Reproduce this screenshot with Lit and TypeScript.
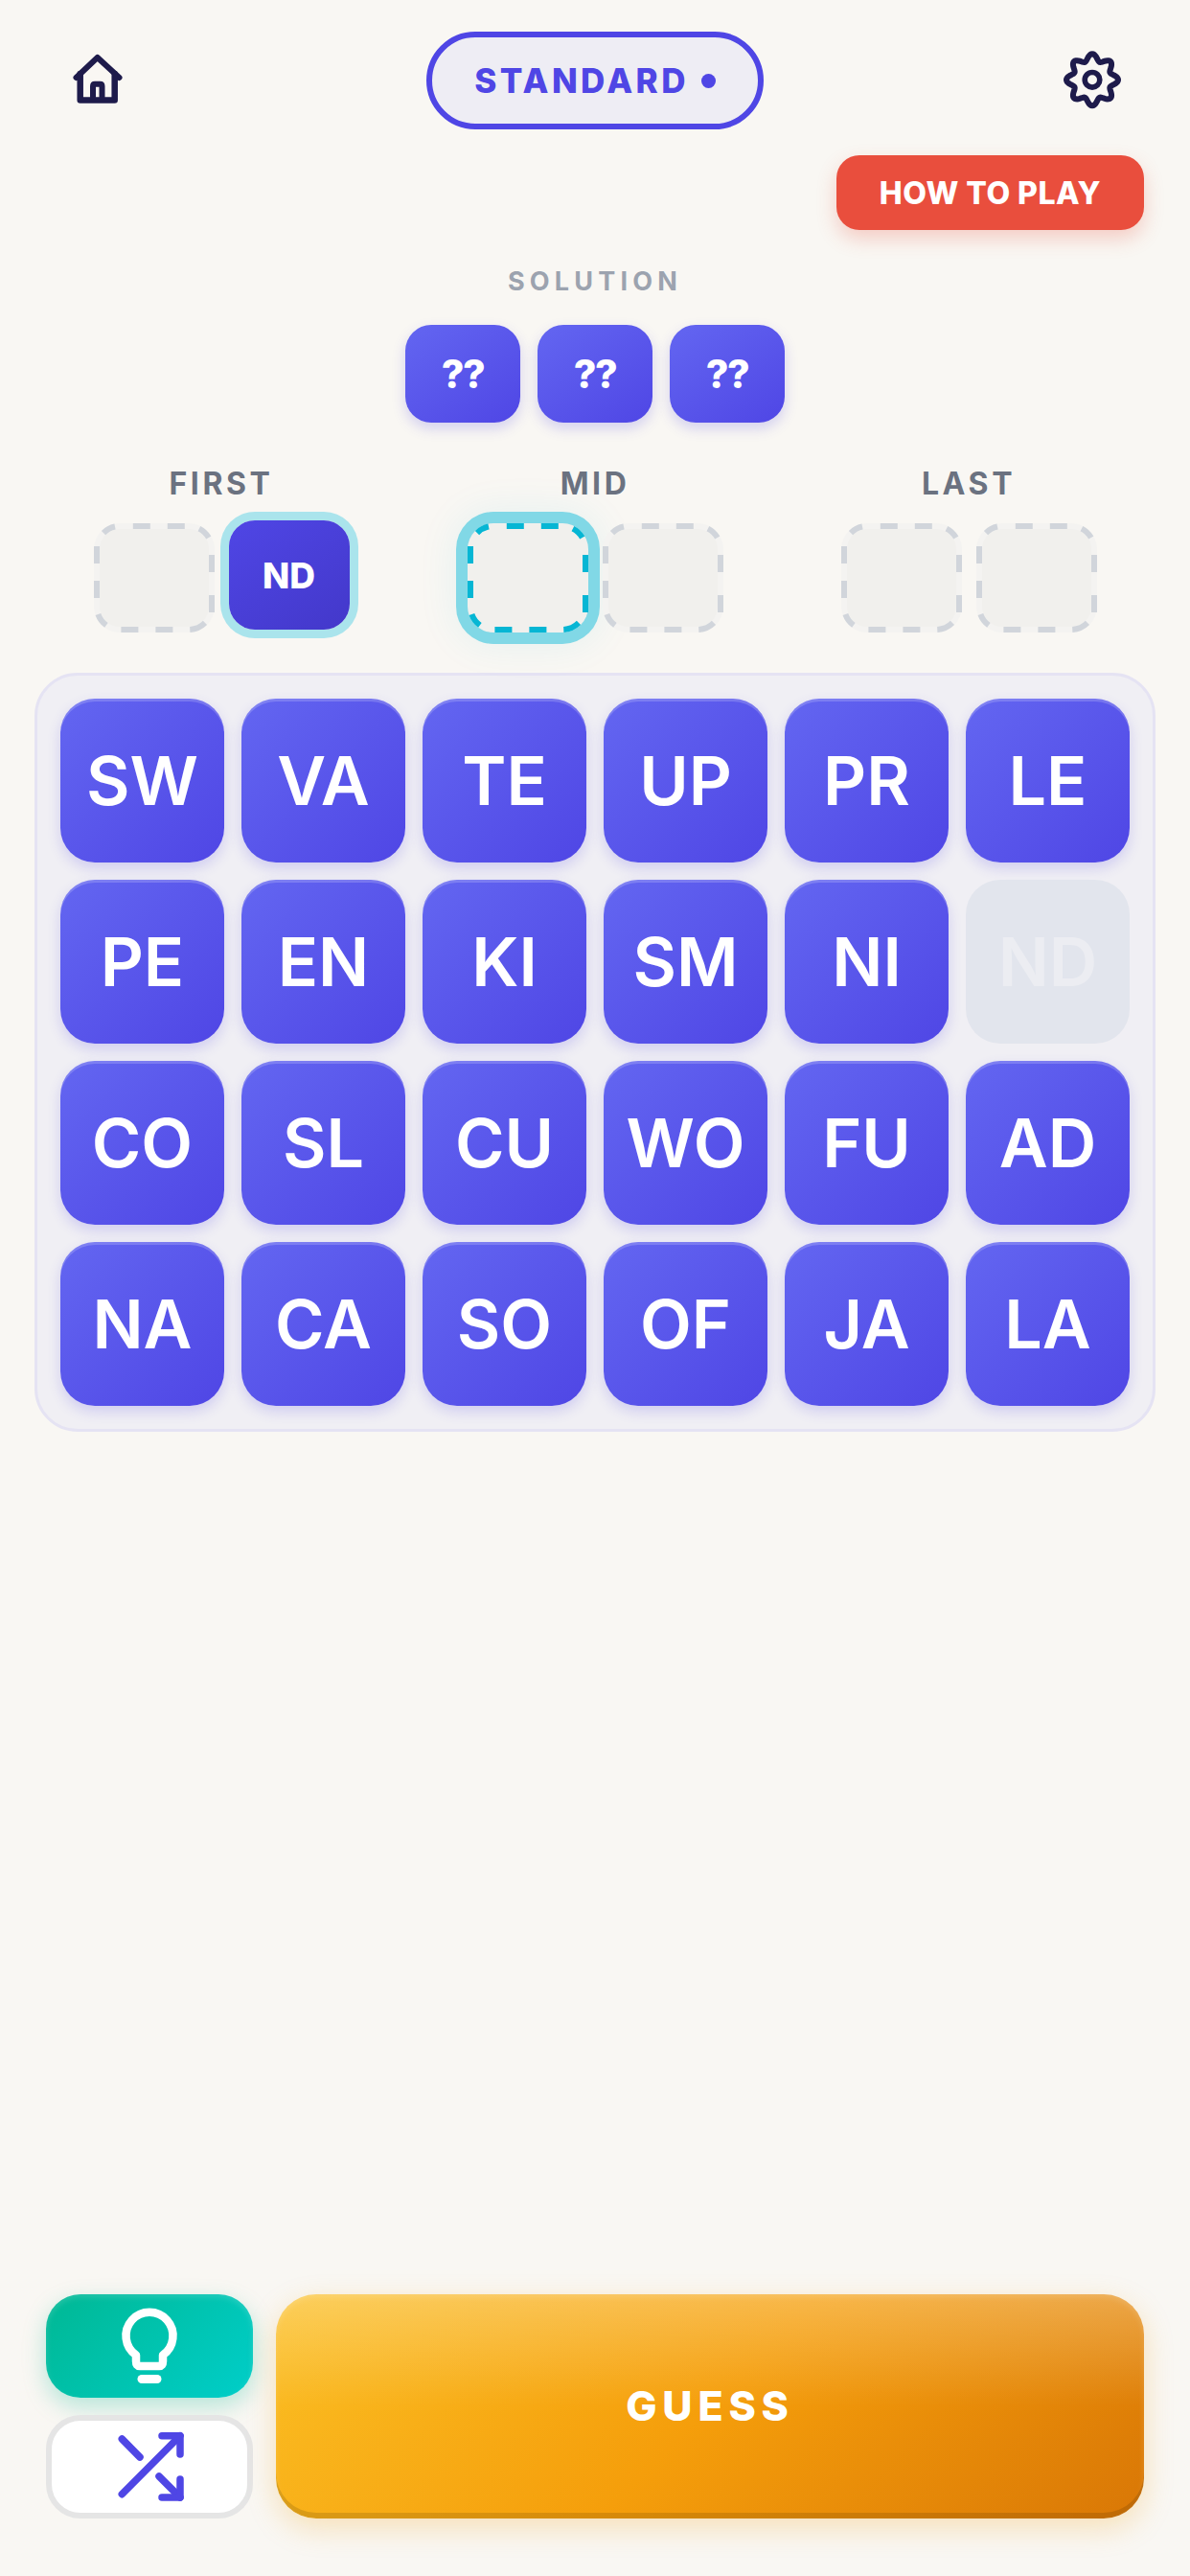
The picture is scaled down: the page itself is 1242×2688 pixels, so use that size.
import { LitElement, html, css, svg } from "lit";
import { customElement } from "lit/decorators.js";

const ROWS = [
  ["SW", "VA", "TE", "UP", "PR", "LE"],
  ["PE", "EN", "KI", "SM", "NI", "ND"],
  ["CO", "SL", "CU", "WO", "FU", "AD"],
  ["NA", "CA", "SO", "OF", "JA", "LA"],
];

const DASHES = [
  "M40.8 3H58.8", "M76.8 3H94.8",
  "M3 24V42", "M3 60V78",
  "M123 33V51", "M123 75V93",
  "M28.4 111H46.4", "M64.4 111H82.4",
  "M10.03 10.03A24 24 0 0 1 22 3.53",
  "M109.9 5.62A24 24 0 0 1 119.78 15",
  "M100.26 110.97A24 24 0 0 0 115.97 103.97",
  "M4.38 95A24 24 0 0 0 12.9 106.4",
];

function gearPath(cx: number, cy: number): string {
  const pts: string[] = [];
  const n = 160;
  for (let i = 0; i < n; i++) {
    const t = (i / n) * Math.PI * 2;
    const r = 23.5 + 3.5 * Math.cos(8 * t);
    pts.push(`${(cx + r * Math.cos(t)).toFixed(2)} ${(cy + r * Math.sin(t)).toFixed(2)}`);
  }
  return "M" + pts.join("L") + "Z";
}

@customElement("app-root")
export class AppRoot extends LitElement {
  static styles = css`
    :host {
      display: flex;
      flex-direction: column;
      width: 1242px;
      height: 2688px;
      background: #f9f7f3;
      font-family: Inter, "Liberation Sans", sans-serif;
      box-sizing: border-box;
      padding: 33px 0 60px;
    }
    * { box-sizing: border-box; }
    .header {
      display: grid;
      grid-template-columns: 1fr auto 1fr;
      align-items: center;
      padding: 0 60px;
    }
    .icon { display: block; width: 90px; height: 90px; }
    .gear { justify-self: end; }
    .pill {
      display: flex;
      align-items: center;
      gap: 13px;
      width: 352px;
      height: 102px;
      justify-content: center;
      border: 6px solid #4f46e5;
      border-radius: 51px;
      background: #eeedf4;
      color: #4f46e5;
      font-size: 35px;
      font-weight: 800;
      letter-spacing: 3.4px;
    }
    .dot { width: 15px; height: 15px; border-radius: 50%; background: #4f46e5; }
    .how-row { display: flex; justify-content: flex-end; padding: 27px 48px 0 0; }
    .how {
      display: flex;
      align-items: center;
      justify-content: center;
      width: 321px;
      height: 78px;
      border-radius: 24px;
      background: #e94e3d;
      color: #fff;
      font-size: 32px;
      font-weight: 800;
      letter-spacing: 0.5px;
      box-shadow: 0 9px 20px rgba(233, 78, 61, 0.25);
    }
    .solution-label {
      margin-top: 39px;
      text-align: center;
      font-size: 27px;
      line-height: 30px;
      font-weight: 700;
      letter-spacing: 5.2px;
      color: #9ca3af;
    }
    .solution {
      display: flex;
      justify-content: center;
      gap: 18px;
      margin-top: 30px;
    }
    .q {
      display: flex;
      align-items: center;
      justify-content: center;
      width: 120px;
      height: 102px;
      border-radius: 27px;
      background: linear-gradient(145deg, #6366f1, #4f46e5);
      color: #fff;
      font-size: 41px;
      font-weight: 800;
      letter-spacing: -1.5px;
      box-shadow: 0 6px 14px rgba(79, 70, 229, 0.22);
    }
    .groups {
      display: flex;
      justify-content: center;
      gap: 123px;
      margin-top: 49px;
    }
    .group { display: flex; flex-direction: column; align-items: center; }
    .group-label {
      font-size: 32px;
      line-height: 30px;
      font-weight: 700;
      letter-spacing: 3.6px;
      color: #6b7280;
    }
    .slots { display: flex; gap: 15px; margin-top: 26px; }
    .slot {
      position: relative;
      width: 126px;
      height: 114px;
      border-radius: 27px;
      background: #f4f3f1;
      color: #d1d5db;
    }
    .slot svg { position: absolute; inset: 0; display: block; width: 126px; height: 114px; }
    .fill { fill: #f1f0ed; }
    .slot.active {
      color: #06b6d4;
      background: #f1f0ed;
      box-shadow: 0 0 0 12px #81d8e6, 0 0 40px 14px rgba(6, 182, 212, 0.08);
    }
    .slot.filled {
      display: flex;
      align-items: center;
      justify-content: center;
      transform: translateY(-3px);
      background: linear-gradient(145deg, #4f46e5, #4338ca);
      color: #fff;
      font-size: 37px;
      font-weight: 800;
      box-shadow: 0 0 0 9px #aae4ec;
    }
    .board {
      display: grid;
      grid-template-columns: repeat(6, 171px);
      grid-auto-rows: 171px;
      gap: 18px;
      width: 1170px;
      margin: 42px 0 0 36px;
      padding: 24px;
      border: 3px solid #e5e3f3;
      border-radius: 45px;
      background: #f0eff4;
    }
    .tile {
      display: flex;
      align-items: center;
      justify-content: center;
      border-radius: 36px;
      background: linear-gradient(135deg, #6366f1, #4f46e5);
      color: #fff;
      font-size: 70px;
      font-weight: 600;
      box-shadow: inset 0 3px 0 rgba(255, 255, 255, 0.18), 0 6px 14px rgba(79, 70, 229, 0.2);
    }
    .tile.used {
      background: #e2e5ed;
      color: #ecedf2;
      box-shadow: none;
    }
    .controls {
      display: flex;
      gap: 24px;
      margin-top: auto;
      padding: 0 48px;
    }
    .side { display: flex; flex-direction: column; gap: 18px; width: 216px; flex: none; }
    .hint, .shuffle {
      display: flex;
      align-items: center;
      justify-content: center;
      height: 108px;
      border-radius: 36px;
    }
    .hint {
      background: linear-gradient(135deg, #00b894, #00cec9);
      box-shadow: inset 0 3px 6px rgba(255, 255, 255, 0.15), 0 9px 24px rgba(0, 184, 148, 0.28);
    }
    .shuffle { background: #fff; border: 6px solid #e5e5e5; }
    .side svg { display: block; width: 72px; height: 72px; overflow: visible; }
    .guess {
      flex: 1;
      display: flex;
      align-items: center;
      justify-content: center;
      height: 234px;
      padding-bottom: 3px;
      border-radius: 42px;
      background:
        linear-gradient(180deg, rgba(255, 255, 255, 0.26), rgba(255, 255, 255, 0) 50%),
        linear-gradient(135deg, #fbbf24 0%, #f59e0b 50%, #d97706 100%);
      color: #fff;
      font-size: 43px;
      font-weight: 800;
      letter-spacing: 5.8px;
      box-shadow: inset 0 -6px 0 rgba(0, 0, 0, 0.12), inset 0 3px 6px rgba(255, 255, 255, 0.15),
        0 10px 30px rgba(245, 158, 11, 0.25);
    }
  `;

  private slotGroup(label: string, slots: unknown) {
    return html`<div class="group">
      <div class="group-label">${label}</div>
      <div class="slots">${slots}</div>
    </div>`;
  }

  private dashed(active = false) {
    return html`<div class="slot ${active ? "active" : ""}">
      <svg viewBox="0 0 126 114" fill="none" stroke="currentColor" stroke-width="6">
        <rect class="fill" x="6" y="6" width="114" height="102" rx="21" stroke="none" />
        ${DASHES.map((d) => svg`<path d=${d} />`)}
      </svg>
    </div>`;
  }

  render() {
    return html`
      <div class="header">
        <svg class="icon" viewBox="0 0 90 90" fill="none" stroke="#1e1b4b" stroke-width="6" stroke-linecap="round" stroke-linejoin="round">
          <path d="M19.5 42 L41.7 21 L64.5 42" />
          <path d="M23.7 38 V65.5 H59.7 V38" stroke-width="6.5" />
          <path d="M37 62 V51 Q37 48.7 39 48.7 H44.5 Q46.5 48.7 46.5 51 V62" />
        </svg>
        <div class="pill"><span>STANDARD</span><span class="dot"></span></div>
        <svg class="icon gear" viewBox="-3 0 90 90" fill="none" stroke="#1e1b4b" stroke-width="6">
          ${svg`<path d=${gearPath(45, 44.3)} />`}
          <circle cx="45" cy="44.3" r="7.8" stroke-width="5.6" />
        </svg>
      </div>
      <div class="how-row"><div class="how">HOW TO PLAY</div></div>
      <div class="solution-label">SOLUTION</div>
      <div class="solution">
        <div class="q">??</div><div class="q">??</div><div class="q">??</div>
      </div>
      <div class="groups">
        ${this.slotGroup("FIRST", html`${this.dashed()}<div class="slot filled">ND</div>`)}
        ${this.slotGroup("MID", html`${this.dashed(true)}${this.dashed()}`)}
        ${this.slotGroup("LAST", html`${this.dashed()}${this.dashed()}`)}
      </div>
      <div class="board">
        ${ROWS.flat().map((t) => html`<div class="tile ${t === "ND" ? "used" : ""}">${t}</div>`)}
      </div>
      <div class="controls">
        <div class="side">
          <div class="hint">
            <svg viewBox="0 0 72 72" fill="none" stroke="#fff" stroke-width="8.5" stroke-linecap="round" stroke-linejoin="round">
              <path d="M22 45.4 A24.5 24.5 0 1 1 50 45.4 V52 Q50 57 46 57 H26 Q22 57 22 52 Z" />
              <path d="M28 70.5 H44" stroke-width="9" />
            </svg>
          </div>
          <div class="shuffle">
            <svg viewBox="0 0 72 72" fill="none" stroke="#4f46e5" stroke-width="7.5" stroke-linecap="round" stroke-linejoin="round">
              <path d="M7.3 64.7 L68 3.7" />
              <path d="M49 3.7 H68 V23" />
              <path d="M7.3 7 L26 26" />
              <path d="M46 46 L68 68" />
              <path d="M49 68 H68 V49" />
            </svg>
          </div>
        </div>
        <div class="guess">GUESS</div>
      </div>
    `;
  }
}
